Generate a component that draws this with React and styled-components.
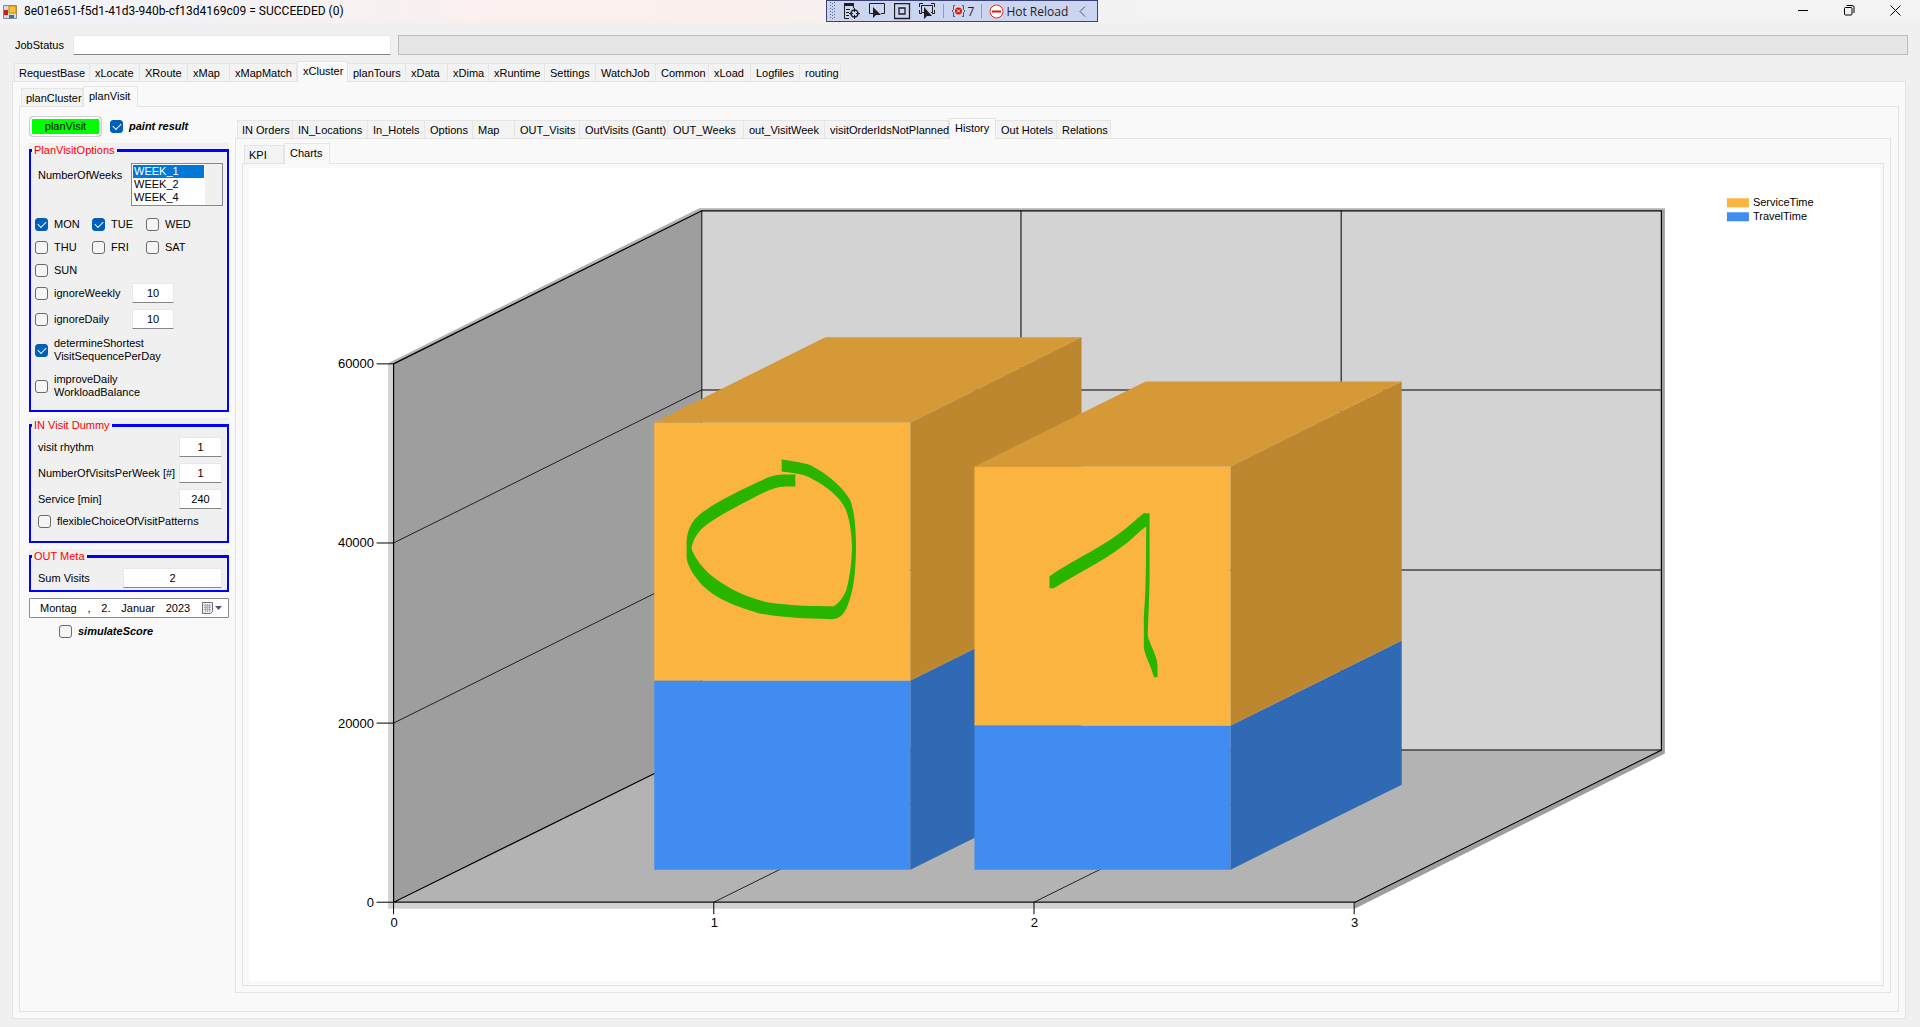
import styled, { createGlobalStyle } from "styled-components";

const mainTabs = [
  { label: "RequestBase", width: 76 },
  { label: "xLocate", width: 50 },
  { label: "XRoute", width: 48 },
  { label: "xMap", width: 42 },
  { label: "xMapMatch", width: 67 },
  { label: "xCluster", width: 51 },
  { label: "planTours", width: 58 },
  { label: "xData", width: 42 },
  { label: "xDima", width: 41 },
  { label: "xRuntime", width: 56 },
  { label: "Settings", width: 51 },
  { label: "WatchJob", width: 60 },
  { label: "Common", width: 53 },
  { label: "xLoad", width: 42 },
  { label: "Logfiles", width: 49 },
  { label: "routing", width: 41 },
];

const clusterTabs = [
  { label: "planCluster", width: 62 },
  { label: "planVisit", width: 55 },
];

const visitTabs = [
  { label: "IN Orders", width: 56 },
  { label: "IN_Locations", width: 75 },
  { label: "In_Hotels", width: 57 },
  { label: "Options", width: 48 },
  { label: "Map", width: 42 },
  { label: "OUT_Visits", width: 65 },
  { label: "OutVisits (Gantt)", width: 88 },
  { label: "OUT_Weeks", width: 76 },
  { label: "out_VisitWeek", width: 81 },
  { label: "visitOrderIdsNotPlanned", width: 124 },
  { label: "History", width: 47 },
  { label: "Out Hotels", width: 61 },
  { label: "Relations", width: 54 },
];

const historyTabs = [
  { label: "KPI", width: 40 },
  { label: "Charts", width: 46 },
];

const days = [
  { name: "MON", on: true },
  { name: "TUE", on: true },
  { name: "WED" },
  { name: "THU" },
  { name: "FRI" },
  { name: "SAT" },
  { name: "SUN" },
];

// front face of every bar, the depth offset is shared
const bars = [
  { x: 655, top: 423, split: 681 },
  { x: 975, top: 467, split: 726 },
];
const barWidth = 256;
const barBottom = 870;
const depthX = 171;
const depthY = 85;

function Tabs({ items, active }) {
  return (
    <TabList role="tablist">
      {items.map((t) => (
        <Tab
          key={t.label}
          type="button"
          role="tab"
          aria-selected={t.label === active}
          $width={t.width}
          $active={t.label === active}
        >
          {t.label}
        </Tab>
      ))}
    </TabList>
  );
}

function Option({ children, bold, on }) {
  return (
    <CheckLabel $bold={bold}>
      <Check type="checkbox" defaultChecked={on} />
      <span>{children}</span>
    </CheckLabel>
  );
}

function DebugBar() {
  return (
    <DebugStrip>
      <svg width="6" height="18" viewBox="0 0 6 18" fill="#5a648f">
        {[0, 3, 6, 9, 12, 15].map((y) => (
          <g key={y}>
            <rect x="0" y={y} width="1" height="1" />
            <rect x="4" y={y} width="1" height="1" />
            <rect x="2" y={y + 1} width="1" height="1" />
          </g>
        ))}
      </svg>
      <ToolButton type="button" aria-label="Live visual tree">
        <svg width="17" height="17" viewBox="0 0 17 17" fill="none" stroke="#1e1e1e">
          <path d="M0 0h10v3H0z" fill="#1e1e1e" stroke="none" />
          <path d="M.5 3v12.500H5M2 6.500h4M2 9.500h3M2 12.500h3M9.500 3v2" />
          <circle cx="10.500" cy="10.500" r="3.500" strokeWidth="1.500" />
          <path d="M10.500 5v4M10.500 12v4M5 10.500h4M12 10.500h4" />
        </svg>
      </ToolButton>
      <ToolButton type="button" aria-label="Select element">
        <svg width="17" height="17" viewBox="0 0 17 17" fill="none" stroke="#1e1e1e">
          <path d="M4 10.500H.5V.5h15v10H12" />
          <path d="M4 4v11l3-3h5z" fill="#1e1e1e" stroke="none" />
        </svg>
      </ToolButton>
      <ToolButton type="button" aria-label="Layout adorners">
        <svg width="17" height="17" viewBox="0 0 17 17" fill="none" stroke="#1e1e1e">
          <path d="M.5.5h15v15H.5zM5 5h6v6H5z" strokeWidth="1.300" />
        </svg>
      </ToolButton>
      <ToolButton type="button" aria-label="Track focused element">
        <svg width="17" height="17" viewBox="0 0 17 17" fill="none" stroke="#1e1e1e">
          <path d="M.5 4V.5H4M12 .5h3.500V4M.5 7v3.500H3M15.500 7v3.500H13M5 9.500H2.500v-7h11v7H12" />
          <path d="M5 4v12l3-3h5z" fill="#1e1e1e" stroke="none" />
        </svg>
      </ToolButton>
      <Divider />
      <ToolButton type="button">
        <svg width="15" height="14" viewBox="0 0 15 14" fill="none" stroke="#555">
          <path d="M4 1.500H2.500v4L1 7l1.500 1.500v4H4M11 1.500h1.500v4L14 7l-1.500 1.500v4H11" />
          <circle cx="7.500" cy="7" r="3.500" fill="#e51400" stroke="none" />
          <path d="M6 5.500l3 3M9 5.500l-3 3" stroke="#fff" />
        </svg>
        7
      </ToolButton>
      <Divider />
      <ToolButton type="button">
        <svg width="15" height="15" viewBox="0 0 15 15">
          <circle cx="7.500" cy="7.500" r="6.500" fill="#fff" stroke="#e0301e" />
          <path d="M3 6.500h9v2H3z" fill="#e51400" />
        </svg>
        Hot Reload
      </ToolButton>
      <CollapseButton type="button" aria-label="Collapse">
        <svg width="7" height="11" viewBox="0 0 7 11" fill="none" stroke="#4a5280">
          <path d="M6 .5l-5 5 5 5" />
        </svg>
      </CollapseButton>
    </DebugStrip>
  );
}

function Chart() {
  const yTicks = [
    { value: 60000, y: 364 },
    { value: 40000, y: 543 },
    { value: 20000, y: 723 },
    { value: 0, y: 902 },
  ];
  const xTicks = [394, 714, 1034, 1354];
  return (
    <ChartSvg viewBox="250 169 1630 812" role="img" aria-label="ServiceTime and TravelTime">
      {/* outer edges of the walls */}
      <path d="M389 364H394V903H1355V909H389Z" fill="#d3d3d3" />
      <path d="M389 364L700 209H1665L1661 212H702L394 365Z" fill="#b3b3b3" />
      <path d="M1661 212L1665 209V754L1355 909V902L1661 751Z" fill="#9e9e9e" />
      {/* walls and floor */}
      <path d="M394 364L702 211V750L394 902Z" fill="#9e9e9e" />
      <path d="M702 211H1661V750H702Z" fill="#d3d3d3" />
      <path d="M394 902L702 750H1661L1355 902Z" fill="#b3b3b3" />
      <g stroke="#000" fill="none" transform="translate(.5 .5)">
        <path d="M394 364L702 211H1661V750L1355 902H394ZM394 902L702 750" strokeWidth="1.200" />
        <path d="M702 211V750M1021 211V750M1341 211V750M702 390H1661M702 570H1661M702 750H1661" />
        <path d="M394 543L702 390M394 723L702 570M714 902L1021 750M1034 902L1341 750" strokeWidth=".8" />
        {yTicks.map((t) => (
          <path key={t.value} d={`M377 ${t.y}H394`} />
        ))}
        {xTicks.map((x) => (
          <path key={x} d={`M${x} 902V914`} />
        ))}
      </g>
      {bars.map((b) => {
        const right = b.x + barWidth;
        return (
          <g key={b.x}>
            <path d={`M${b.x} ${b.split}H${right}V${barBottom}H${b.x}Z`} fill="#418cf0" />
            <path
              d={`M${right} ${b.split}l${depthX} -${depthY}V${barBottom - depthY}L${right} ${barBottom}Z`}
              fill="#3069b4"
            />
            <path d={`M${b.x} ${b.top}H${right}V${b.split}H${b.x}Z`} fill="#fcb441" />
            <path
              d={`M${right} ${b.top}l${depthX} -${depthY}V${b.split - depthY}L${right} ${b.split}Z`}
              fill="#bd872f"
            />
            <path
              d={`M${b.x} ${b.top}l${depthX} -${depthY}h${barWidth}l-${depthX} ${depthY}Z`}
              fill="#d59937"
            />
          </g>
        );
      })}
      {/* pen marks */}
      <g fill="#28b400">
        <path
          transform="translate(671 441) scale(.3333)"
          d="M334 57C365 60 390 66 415 72C460 92 520 140 540 180C553 215 557 270 557 320C556 400 550 450 530 500C518 525 505 537 480 536C400 533 340 533 265 518C180 495 110 460 80 415C65 395 50 370 49 350V305C50 270 65 245 78 232C120 190 200 155 290 112C310 104 325 102 340 102H375V138H345C310 140 290 150 200 198C150 225 110 248 90 270C72 290 65 310 64 325C75 355 95 380 120 403C180 450 240 475 300 487C370 496 430 498 490 497C505 490 520 470 528 448C540 405 544 360 545 320C544 270 535 220 520 195C495 155 450 128 415 110C395 100 370 98 334 93Z"
        />
        <path
          transform="translate(1030 501) scale(.3333)"
          d="M60 228C100 195 200 150 270 98C300 77 320 55 343 38H360V240C358 330 355 370 355 408C365 440 382 465 384 495V530H373C365 495 345 465 343 440V360C346 300 350 280 350 78C330 90 310 115 285 133C210 190 150 215 73 263H60Z"
        />
      </g>
      <AxisText>
        {yTicks.map((t) => (
          <text key={t.value} x="375" y={t.y + 5} textAnchor="end">
            {t.value}
          </text>
        ))}
        {xTicks.map((x, i) => (
          <text key={x} x={x + 1} y="927" textAnchor="middle">
            {i}
          </text>
        ))}
      </AxisText>
      <LegendText>
        <rect x="1727" y="199" width="22" height="9" fill="#fcb441" />
        <text x="1753" y="207">ServiceTime</text>
        <rect x="1727" y="213" width="22" height="9" fill="#418cf0" />
        <text x="1753" y="221">TravelTime</text>
      </LegendText>
    </ChartSvg>
  );
}

function Sidebar() {
  return (
    <Side>
      <RunRow>
        <RunButton type="button">planVisit</RunButton>
        <Option bold on>
          paint result
        </Option>
      </RunRow>

      <Group>
        <Fieldset>
          <legend>PlanVisitOptions</legend>
          <WeeksRow>
            <label htmlFor="weeks">NumberOfWeeks</label>
            <WeekList id="weeks" size={3} defaultValue="WEEK_1">
              <option>WEEK_1</option>
              <option>WEEK_2</option>
              <option>WEEK_4</option>
            </WeekList>
          </WeeksRow>
          <DayGrid>
            {days.map((d) => (
              <Option key={d.name} on={d.on}>
                {d.name}
              </Option>
            ))}
          </DayGrid>
          <IgnoreRows>
            <Option>ignoreWeekly</Option>
            <NumberBox $width={42} defaultValue="10" aria-label="ignoreWeekly limit" />
            <Option>ignoreDaily</Option>
            <NumberBox $width={42} defaultValue="10" aria-label="ignoreDaily limit" />
          </IgnoreRows>
          <LongOptions>
            <Option on>
              determineShortest
              <br />
              VisitSequencePerDay
            </Option>
            <Option>
              improveDaily
              <br />
              WorkloadBalance
            </Option>
          </LongOptions>
        </Fieldset>
      </Group>

      <Group>
        <Fieldset>
          <legend>IN Visit Dummy</legend>
          <Fields $bottom={13}>
            <Field>
              <label htmlFor="rhythm">visit rhythm</label>
              <NumberBox id="rhythm" $width={43} defaultValue="1" />
            </Field>
            <Field>
              <label htmlFor="visits">NumberOfVisitsPerWeek [#]</label>
              <NumberBox id="visits" $width={43} defaultValue="1" />
            </Field>
            <Field>
              <label htmlFor="service">Service [min]</label>
              <NumberBox id="service" $width={43} defaultValue="240" />
            </Field>
            <Option>flexibleChoiceOfVisitPatterns</Option>
          </Fields>
        </Fieldset>
      </Group>

      <Group>
        <Fieldset>
          <legend>OUT Meta</legend>
          <Fields $bottom={2}>
            <Field>
              <label htmlFor="sum">Sum Visits</label>
              <NumberBox id="sum" $width={99} defaultValue="2" />
            </Field>
          </Fields>
        </Fieldset>
      </Group>

      <DateButton type="button">
        <span>Montag</span>
        <span>,</span>
        <span>2.</span>
        <span>Januar</span>
        <span>2023</span>
        <svg width="22" height="14" viewBox="0 0 22 14">
          <path d="M1.500 1.500h10v9l-2 2h-8z" fill="#e8eef7" stroke="#7a6f6a" />
          <path d="M3 4.500h7M3 6.500h7M3 8.500h7M4.500 3v8M6.500 3v8M8.500 3v8" stroke="#9fb0c8" />
          <path d="M14 5h7l-3.500 4z" fill="#44597d" />
        </svg>
      </DateButton>
      <ScoreRow>
        <Option bold>simulateScore</Option>
      </ScoreRow>
    </Side>
  );
}

function App() {
  return (
    <Window>
      <GlobalStyle />
      <TitleBar>
        <Title>
          <svg width="14" height="14" viewBox="0 0 14 14">
            <path d="M.5.500h13v13H.5z" fill="#d9d9d9" stroke="#8a8a8a" />
            <path d="M6 1h7v7H6z" fill="#f7c331" stroke="#c58a00" />
            <path d="M1 5h4v5H1z" fill="#c8201c" />
            <path d="M6 10h5v3H6z" fill="#2f6fd6" />
          </svg>
          <span>8e01e651-f5d1-41d3-940b-cf13d4169c09 = SUCCEEDED (0)</span>
        </Title>
        <DebugBar />
        <WindowButtons>
          <button type="button" aria-label="Minimize">
            <svg width="11" height="11" viewBox="0 0 11 11" stroke="#000">
              <path d="M0 5.500h10" />
            </svg>
          </button>
          <button type="button" aria-label="Restore">
            <svg width="11" height="11" viewBox="0 0 11 11" fill="none" stroke="#000">
              <rect x=".5" y="2.500" width="7.500" height="7.500" rx="1" />
              <path d="M2.500.500H8a2 2 0 0 1 2 2V8" />
            </svg>
          </button>
          <button type="button" aria-label="Close">
            <svg width="11" height="11" viewBox="0 0 11 11" stroke="#000">
              <path d="M.5.500l10 10M10.500.500l-10 10" />
            </svg>
          </button>
        </WindowButtons>
      </TitleBar>

      <StatusRow>
        <label htmlFor="status">JobStatus</label>
        <StatusBox id="status" />
        <ProgressTrack role="progressbar" aria-label="Job progress" />
      </StatusRow>

      <MainArea>
        <Tabs items={mainTabs} active="xCluster" />
        <Pane>
          <ClusterArea>
            <Tabs items={clusterTabs} active="planVisit" />
            <Pane>
              <VisitColumns>
                <Sidebar />
                <VisitArea>
                  <Tabs items={visitTabs} active="History" />
                  <Pane>
                    <HistoryArea>
                      <Tabs items={historyTabs} active="Charts" />
                      <Pane>
                        <ChartPanel>
                          <Chart />
                        </ChartPanel>
                      </Pane>
                    </HistoryArea>
                  </Pane>
                </VisitArea>
              </VisitColumns>
            </Pane>
          </ClusterArea>
        </Pane>
      </MainArea>
    </Window>
  );
}
export default App;

const GlobalStyle = createGlobalStyle`
  * {
    box-sizing: border-box;
  }

  body {
    margin: 0;
    background: #f0f0f0;
    color: #000;
    font: 11px/13px "Liberation Sans", Arial, sans-serif;
  }

  button,
  input,
  select {
    font: inherit;
    color: inherit;
    margin: 0;
  }

  svg {
    display: block;
    flex: none;
  }
`;

const Window = styled.div`
  display: flex;
  flex-direction: column;
  min-height: 100vh;
`;

const TitleBar = styled.header`
  display: grid;
  grid-template-columns: 1fr auto 1fr;
  height: 23px;
  padding-left: 3px;
  background: linear-gradient(90deg, #eff3fa 0%, #fbf0ee 28%, #f8f1ef 45%, #f3f3f3 60%);
  font-size: 12px;
`;

const Title = styled.div`
  display: flex;
  align-items: center;
  gap: 7px;
  font-family: Roboto, "Open Sans", sans-serif;
  white-space: nowrap;
`;

const DebugStrip = styled.div`
  display: flex;
  align-items: center;
  gap: 8px;
  width: 272px;
  height: 22px;
  padding: 0 3px;
  border: 1px solid #3b4276;
  background: #ccd5f0;
  font-family: "Open Sans", "Noto Sans", sans-serif;
`;

const ToolButton = styled.button`
  display: flex;
  align-items: center;
  gap: 2px;
  padding: 0;
  border: 0;
  background: none;
  color: #1e1e1e;
  white-space: nowrap;
`;

const Divider = styled.span`
  width: 1px;
  height: 14px;
  margin: 0 -1px;
  background: #8e9bc8;
`;

const CollapseButton = styled(ToolButton)`
  margin-left: auto;
  padding-right: 8px;
`;

const WindowButtons = styled.div`
  display: flex;
  justify-content: flex-end;
  padding-right: 2px;

  button {
    display: flex;
    align-items: center;
    justify-content: center;
    width: 46px;
    height: 21px;
    padding: 0;
    border: 0;
    background: none;
  }
`;

const StatusRow = styled.div`
  display: flex;
  align-items: center;
  padding: 12px 12px 0 15px;

  label {
    width: 58px;
  }
`;

const TextBox = styled.input`
  height: 20px;
  padding: 0 4px;
  border: 1px solid #e8e8e8;
  border-bottom-color: #868686;
  border-radius: 1px;
  background: #fff;
  outline: none;
`;

const StatusBox = styled(TextBox)`
  width: 318px;
`;

const ProgressTrack = styled.div`
  flex: 1;
  height: 20px;
  margin-left: 7px;
  border: 1px solid #bcbcbc;
  background: #e6e6e6;
`;

const MainArea = styled.div`
  flex: 1;
  display: flex;
  flex-direction: column;
  padding: 6px 14px 8px 12px;
`;

const TabList = styled.div`
  display: flex;
  align-items: flex-end;
  height: 20px;
  padding-left: 2px;
`;

const Tab = styled.button`
  width: ${(p) => p.$width}px;
  height: ${(p) => (p.$active ? 21 : 18)}px;
  margin-bottom: ${(p) => (p.$active ? -1 : 0)}px;
  padding: ${(p) => (p.$active ? "0 0 2px 5px" : "1px 0 0 5px")};
  border: 1px solid #e5e5e5;
  border-left-width: ${(p) => (p.$active ? 1 : 0)}px;
  border-bottom: 0;
  background: ${(p) => (p.$active ? "#f9f9f9" : "#f3f3f3")};
  text-align: left;
  white-space: nowrap;
  position: relative;

  &:first-child {
    padding-left: 4px;
    border-left-width: 1px;
  }
`;

const Pane = styled.div`
  flex: 1;
  display: flex;
  flex-direction: column;
  border: 1px solid #e3e3e3;
  background: #f9f9f9;
`;

const ClusterArea = styled.div`
  flex: 1;
  display: flex;
  flex-direction: column;
  padding: 4px 6px 6px;
`;

const VisitColumns = styled.div`
  flex: 1;
  display: flex;
  gap: 6px;
  padding: 8px 7px 18px 9px;
`;

const VisitArea = styled.div`
  flex: 1;
  min-width: 0;
  display: flex;
  flex-direction: column;
  padding-top: 3px;
`;

const HistoryArea = styled.div`
  flex: 1;
  display: flex;
  flex-direction: column;
  padding: 4px 6px 6px;
`;

const ChartPanel = styled.div`
  flex: 1;
  display: flex;
  margin: 4px 3px 4px 6px;
  background: #fff;
`;

const ChartSvg = styled.svg`
  flex: 1;
  width: 100%;
  min-width: 0;
`;

const AxisText = styled.g`
  font-size: 13px;
`;

const LegendText = styled.g`
  font-size: 11px;
`;

const Side = styled.aside`
  flex: none;
  display: flex;
  flex-direction: column;
  gap: 6px;
  width: 200px;
`;

const RunRow = styled.div`
  display: flex;
  align-items: center;
  gap: 8px;
  height: 22px;
`;

const RunButton = styled.button`
  width: 73px;
  height: 21px;
  padding: 0;
  border: 1px solid #d0d0d0;
  border-radius: 4px;
  background: #00ff00;
  box-shadow: inset 0 0 0 2px #fdfdfd;
`;

const CheckLabel = styled.label`
  display: flex;
  align-items: center;
  gap: 6px;
  font-weight: ${(p) => (p.$bold ? "bold" : "normal")};
  font-style: ${(p) => (p.$bold ? "italic" : "normal")};
`;

const Check = styled.input`
  appearance: none;
  flex: none;
  display: grid;
  place-items: center;
  width: 13px;
  height: 13px;
  border: 1px solid #6a6a6a;
  border-radius: 3px;
  background: #f5f5f5;

  &:checked {
    border-color: #005fb8;
    background: #005fb8;
  }

  &:checked::after {
    content: "";
    width: 7px;
    height: 4px;
    margin-top: -2px;
    border: solid #fff;
    border-width: 0 0 1px 1px;
    transform: rotate(-45deg);
  }
`;

const Group = styled.div`
  background: #f0f0f0;
`;

const Fieldset = styled.fieldset`
  min-width: 0;
  margin: 0;
  padding: 0;
  border: 2px solid #0000ff;
  border-top-width: 3px;

  legend {
    margin-left: 1px;
    padding: 0 2px;
    color: #ff0000;
    line-height: 15px;
  }
`;

const WeeksRow = styled.div`
  display: flex;
  justify-content: space-between;
  padding: 5px 4px 0 7px;

  label {
    padding-top: 6px;
  }
`;

const WeekList = styled.select`
  width: 92px;
  height: 43px;
  padding: 1px 18px 1px 1px;
  border: 1px solid #828790;
  border-radius: 0;
  background: linear-gradient(90deg, #fff 73px, #f0f0f0 73px);
  overflow: hidden;
  outline: none;

  option {
    height: 13px;
    min-height: 13px;
    padding: 0 1px;
    line-height: 13px;
  }

  option:checked {
    background: linear-gradient(#0078d7, #0078d7);
    color: #fff;
    -webkit-text-fill-color: #fff;
  }
`;

const DayGrid = styled.div`
  display: grid;
  grid-template-columns: 57px 54px 1fr;
  grid-auto-rows: 23px;
  padding: 7px 0 0 4px;
`;

const IgnoreRows = styled.div`
  display: grid;
  grid-template-columns: 97px 1fr;
  grid-auto-rows: 20px;
  row-gap: 6px;
  padding: 1px 0 0 4px;
`;

const NumberBox = styled(TextBox)`
  width: ${(p) => p.$width}px;
  text-align: center;
`;

const LongOptions = styled.div`
  display: flex;
  flex-direction: column;
  gap: 10px;
  padding: 8px 0 11px 4px;
`;

const Fields = styled.div`
  display: flex;
  flex-direction: column;
  gap: 6px;
  padding: 4px 5px ${(p) => p.$bottom}px 7px;
`;

const Field = styled.div`
  display: flex;
  align-items: center;
  justify-content: space-between;
  white-space: nowrap;
`;

const DateButton = styled.button`
  display: flex;
  align-items: center;
  justify-content: space-between;
  height: 20px;
  padding: 0 5px 0 10px;
  border: 1px solid #8a8a8a;
  border-radius: 1px;
  background: #fff;
`;

const ScoreRow = styled.div`
  padding: 1px 0 0 30px;
`;
